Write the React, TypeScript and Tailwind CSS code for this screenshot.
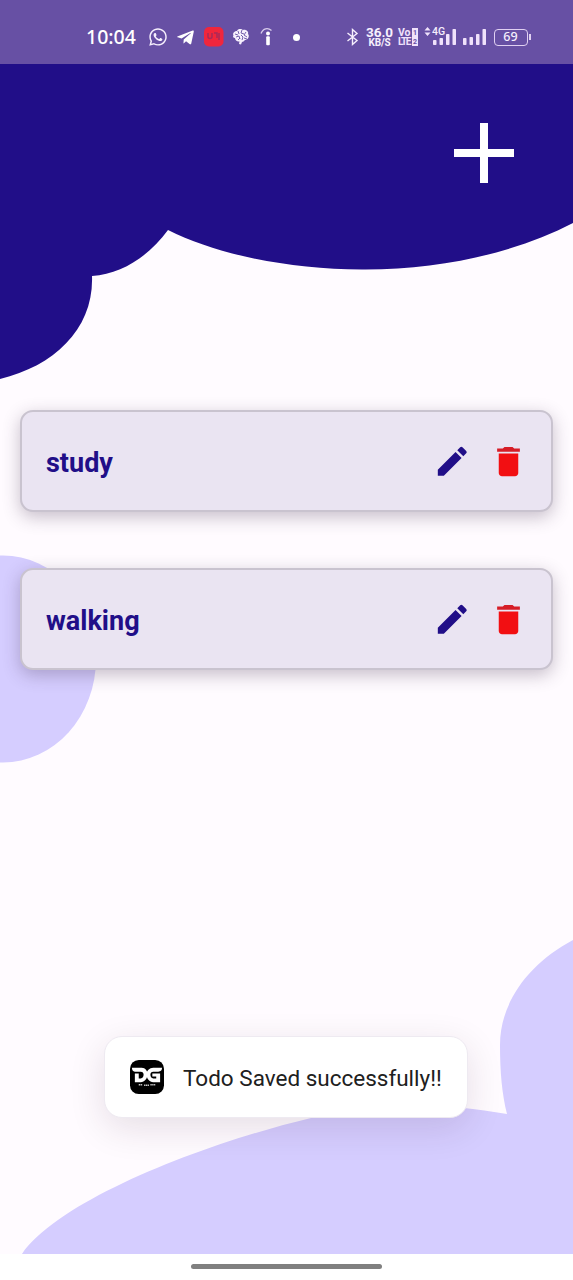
import { FaWhatsapp, FaTelegramPlane } from "react-icons/fa";
import { MdEdit } from "react-icons/md";

function Bars({ heights }: { heights: number[] }) {
  return (
    <svg width="23" height="18" viewBox="0 0 23 18" fill="#f0e2fb" className="shrink-0">
      {heights.map((h, i) => (
        <rect key={i} x={i * 6.5} y={17 - h} width="3.5" height={h} rx="0.8" />
      ))}
    </svg>
  );
}

function StatusBar() {
  return (
    <header className="relative flex h-16 shrink-0 items-center bg-[#6750a4] pt-2.5 pl-[86px] text-[#f6effd]">
      <span className="w-[51px] shrink-0 font-['Noto_Sans',sans-serif] text-[19.5px] leading-5 font-medium whitespace-nowrap text-white">
        10:04
      </span>
      <FaWhatsapp className="ml-[11px] size-5 shrink-0" />
      <FaTelegramPlane className="ml-[8px] size-[19px] shrink-0 text-white" />
      <svg width="20" height="20" viewBox="0 0 20 20" className="ml-[9px] shrink-0">
        <rect x="0" y="0" width="19.5" height="19.5" rx="5" fill="#f0263c" />
        <path d="M4 6v3.5q0 2 2 2t2-2V6M10 6h3v5M15 6v7" fill="none" stroke="#a82a58" strokeWidth="1.5" />
      </svg>
      <svg width="18" height="18" viewBox="0 0 18 18" className="ml-2 shrink-0">
        <path
          d="M1.5 7.5C0 5 3 3 5 3c1-3 5-2 6-1 3-1 6 2 5 4 2 2 0 6-3 6-1 1-2 2-3 2l-1 2.5-2-.5.5-2.5C5 14 3 12 3 10 1 10 .5 8 1.5 7.5Z"
          fill="#f6effd"
        />
        <path
          d="M3 6l3 1M6 3l1 3M10 2l-1 3 3 1M14 4l-2 3 3 2M4 9l3-1 1 3M9 7l2 2-1 3M12 10l3 1M6 12l2-2"
          fill="none"
          stroke="#6750a4"
          strokeWidth="0.9"
        />
      </svg>
      <svg width="16" height="20" viewBox="0 0 16 20" className="ml-[9px] shrink-0" fill="white">
        <path d="M2 6.5C4 1 9 .5 12.5 3.5" fill="none" stroke="#d9cdec" strokeWidth="1.3" />
        <circle cx="9" cy="6.5" r="2" />
        <rect x="7.2" y="9.3" width="3.6" height="9" rx="1" />
      </svg>
      <span className="ml-[18px] size-[7px] shrink-0 rounded-full bg-white" />
      <svg width="13" height="20" viewBox="0 0 13 20" className="ml-[46px] shrink-0">
        <path d="M1.5 6 11 13.5 6.5 17.5v-15L11 6.5 1.5 14" fill="none" stroke="#f6effd" strokeWidth="1.4" />
      </svg>
      <div className="ml-1.5 flex w-[29px] shrink-0 flex-col items-center font-['Roboto',sans-serif] font-bold whitespace-nowrap">
        <span className="text-[13.5px] leading-[11px]">36.0</span>
        <span className="text-[10px] leading-[10px] tracking-[-0.2px]">KB/S</span>
      </div>
      <div className="ml-1 flex w-[21px] shrink-0 flex-col font-['Roboto',sans-serif] text-[10.5px] leading-[9px] font-bold text-[#f0e2fb]">
        <div className="flex items-center">
          <span className="w-3.5 tracking-[-0.2px]">Vo</span>
          <span className="flex h-[9px] w-1.5 items-center justify-center bg-[#f0e2fb] text-[7px] leading-[8px] text-[#6750a4]">
            1
          </span>
        </div>
        <div className="flex items-center">
          <span className="w-3.5 text-[10px] tracking-[-1.4px]">LTE</span>
          <span className="flex h-[9px] w-1.5 items-center justify-center bg-[#f0e2fb] text-[7px] leading-[8px] text-[#6750a4]">
            2
          </span>
        </div>
      </div>
      <div className="relative ml-[14px] flex h-[18px] shrink-0">
        <Bars heights={[5, 7, 11, 16]} />
        <div className="absolute -top-[2px] -left-[9px] flex items-center gap-px">
          <svg width="7" height="9" viewBox="0 0 7 9" fill="#f0e2fb">
            <path d="M3.5 0 6.5 3.4h-6zM3.5 9 .5 5.5h6z" />
          </svg>
          <span className="font-['Roboto',sans-serif] text-[10.5px] leading-[11px] font-medium">4G</span>
        </div>
      </div>
      <div className="ml-[7px] flex shrink-0">
        <Bars heights={[7, 8, 11, 16]} />
      </div>
      <div className="ml-2 flex h-[17px] w-[34px] shrink-0 items-center justify-center rounded-[4px] border-[1.5px] border-[#e0d0f2] pr-px font-['Noto_Sans',sans-serif] text-[12.5px] font-medium">
        69
      </div>
      <span className="ml-px h-1.5 w-[1.5px] shrink-0 bg-[#e0d0f2]" />
    </header>
  );
}

function Backdrop() {
  return (
    <svg viewBox="0 0 573 1280" className="absolute inset-0 h-[1280px] w-[573px]" aria-hidden="true">
      <path
        d="M0 64H573V223C515 253 440 270 362 269.5C288 269 218 255 168 230C149 256 122 274 92 276C94 328 55 366 0 379Z"
        fill="#210e88"
      />
      <ellipse cx="3" cy="659" rx="93" ry="103.5" fill="#d5cdff" />
      <path
        d="M573 940C528 964 500 1003 500 1045C500 1072 502 1094 507 1114C445 1103 378 1101 311 1118C206 1143 60 1199 22 1254H573Z"
        fill="#d5cdff"
      />
    </svg>
  );
}

function TodoCard({ title }: { title: string }) {
  return (
    <li className="flex h-[102px] items-center rounded-[13px] border-2 border-[#c9c3cf] bg-[#eae4f2] pr-[23px] pl-6 shadow-[0_5px_17px_rgba(60,40,70,0.29)]">
      <span className="flex-1 pt-1 font-['Roboto',sans-serif] text-[27px] leading-8 font-bold text-[#210e88]">{title}</span>
      <button aria-label="Edit">
        <MdEdit className="size-[38.5px] text-[#210e88]" />
      </button>
      <button aria-label="Delete" className="ml-[18px]">
        <svg viewBox="0 0 24 24" className="size-[39px]">
          <path d="M6 19c0 1.1.9 2 2 2h8c1.1 0 2-.9 2-2V7H6v12z" fill="#f20f12" />
          <path d="M19 4h-3.5l-1-1h-5l-1 1H5v2h14V4z" fill="#d61d27" />
        </svg>
      </button>
    </li>
  );
}

function Toast() {
  return (
    <div className="absolute top-[1036px] left-[104px] flex h-[82px] w-[364px] items-center rounded-[18px] border border-[#eeeaf1] bg-white pl-[25px] shadow-[0_10px_36px_rgba(50,20,40,0.12)]">
      <svg width="34" height="34" viewBox="0 0 35 35" className="shrink-0">
        <rect width="35" height="35" rx="9" fill="#000" />
        <path
          d="M2 8h10c4 0 6 3 6 7s-3 8-7 8H5v-9h4v5h2c2 0 3-2 3-4s-1-3-3-3H5C3 12 2 10 2 8Z"
          fill="#fff"
        />
        <path
          d="M33 8h-9c-4 0-7 3-7 7s3 8 7 8h7v-9h-8v3h4v2h-3c-2 0-3-2-3-4s1-3 3-3h5c3 0 4-2 4-4Z"
          fill="#fff"
        />
        <path d="M9 25.5h4M14.5 26h5M21 25.5h5" stroke="#ccc" strokeWidth="1.5" strokeDasharray="1.4 .5" />
      </svg>
      <span className="ml-[19px] pt-1 font-['Roboto',sans-serif] text-[22.5px] font-[450] whitespace-nowrap text-[#202020]">
        Todo Saved successfully!!
      </span>
    </div>
  );
}

export default function App() {
  return (
    <div className="relative flex h-[1280px] w-[573px] flex-col overflow-hidden bg-[#fffbff]">
      <Backdrop />
      <StatusBar />
      <main className="relative flex flex-1 flex-col">
        <div className="flex h-[346px] shrink-0 items-start justify-end pt-[59px] pr-[59px]">
          <button aria-label="Add">
            <svg width="60" height="60" viewBox="0 0 60 60" fill="#fff">
              <path d="M26 0h8v26h26v8H34v26h-8V34H0v-8h26z" />
            </svg>
          </button>
        </div>
        <ul className="flex flex-col gap-14 px-5">
          <TodoCard title="study" />
          <TodoCard title="walking" />
        </ul>
      </main>
      <footer className="relative flex h-[26px] shrink-0 justify-center bg-white pt-2.5">
        <span className="h-[5px] w-[191px] rounded-full bg-[#808080]" />
      </footer>
      <Toast />
    </div>
  );
}
